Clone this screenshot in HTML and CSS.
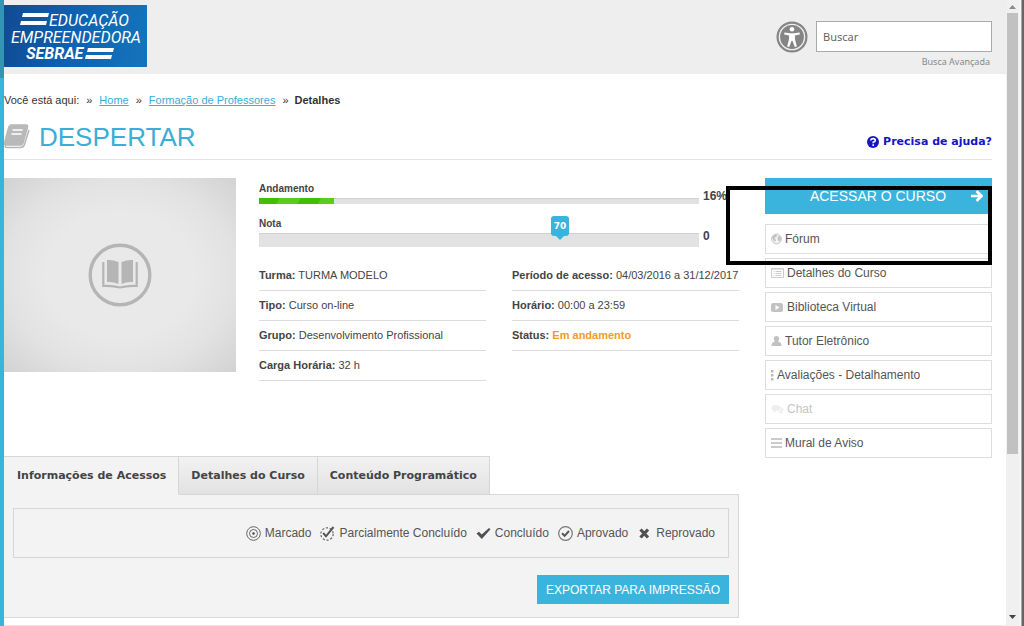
FILE: index.html
```html
<!DOCTYPE html>
<html lang="pt-BR">
<head>
<meta charset="utf-8">
<title>Despertar - Educação Empreendedora Sebrae</title>
<link rel="stylesheet" href="styles.css">
</head>
<body>
<div class="window">
  <div class="stripe"></div>
  <div class="page">
    <header class="header">
      <a class="logo" href="#" aria-label="Educação Empreendedora Sebrae">
        <svg width="143" height="62" viewBox="0 0 143 62">
          <path d="M19 8h26l-1 4H18zM17 16h26l-1 4H16z" fill="#fff"/>
          <path d="M84 43h26l-1 4H83zM82 50h26l-1 4H81z" fill="#fff"/>
          <text class="logo-text" x="45" y="21">EDUCAÇÃO</text>
          <text class="logo-text" x="7" y="38">EMPREENDEDORA</text>
          <text class="logo-text logo-strong" x="22" y="54">SEBRAE</text>
        </svg>
      </a>
      <button class="access" type="button" aria-label="Acessibilidade">
        <svg width="32" height="32" viewBox="0 0 32 32">
          <circle cx="16" cy="16" r="15.500" fill="#858585"/>
          <circle cx="16" cy="16" r="12.600" fill="none" stroke="#eee" stroke-width="1.400"/>
          <circle cx="16" cy="8.200" r="2.300" fill="#fff"/>
          <path d="M8.500 11.500 14 12.200h4l5.500-.7.300 1.900-5 1 .2 3.600 1.800 7.600-2 .5L16.500 20h-1l-2.300 6.100-2-.5L13 18l.2-3.600-5-1z" fill="#fff"/>
        </svg>
      </button>
      <form class="search">
        <input class="search-box" type="text" placeholder="Buscar" aria-label="Buscar">
        <a class="search-more" href="#">Busca Avançada</a>
      </form>
    </header>

    <main class="content">
      <nav class="crumbs">
        <span>Você está aqui:</span><span class="sep">»</span>
        <a href="#">Home</a><span class="sep">»</span>
        <a href="#">Formação de Professores</a><span class="sep">»</span>
        <strong>Detalhes</strong>
      </nav>

      <div class="title-row">
        <svg class="title-icon" width="26" height="26" viewBox="0 0 26 26">
          <path d="M6 1h16q2 0 1.500 2L19 19q-.6 2-2.500 2H2q-2 2 .5 2.500h14q3 0 4-3L25 6" fill="none" stroke="#b5b5b5" stroke-width="1.500"/>
          <path d="M6 1h16q2 0 1.500 2L19 19q-.6 2-2.500 2H0V18L4 3q.5-2 2-2z" fill="#b9b9b9"/>
          <path d="M8.500 6h10M7.500 10h10" stroke="#fff" stroke-width="1.600"/>
        </svg>
        <h1>DESPERTAR</h1>
        <a class="help" href="#">
          <svg width="12" height="12" viewBox="0 0 12 12"><circle cx="6" cy="6" r="6" fill="#1515c4"/><path d="M3.800 4.500Q4 2.600 6.100 2.600T8.300 4.400Q8.300 5.400 6.200 6.200V7.300M6.200 8.300V9.900" fill="none" stroke="#fff" stroke-width="1.600"/></svg>
          <span>Precisa de ajuda?</span>
        </a>
      </div>

      <div class="columns">
        <div class="main">
          <section class="course">
            <div class="thumb">
              <svg width="64" height="64" viewBox="0 0 64 64">
                <circle cx="32" cy="32" r="29.800" fill="none" stroke="#b5b5b5" stroke-width="3.400"/>
                <path d="M19 17q6-.5 11.500 2v22q-5.500-2.500-11.500-2zM45 17q-6-.5-11.500 2v22q5.500-2.500 11.500-2z" fill="#b5b5b5"/>
                <path d="M15.300 19v24q9-.5 16.700 1.500 8-2 16.700-1.500V19" fill="none" stroke="#b5b5b5" stroke-width="2.200"/>
              </svg>
            </div>
            <div class="info">
              <div class="meter">
                <div class="meter-body">
                  <span class="meter-label">Andamento</span>
                  <div class="bar"><div class="bar-fill" style="width:17%"></div></div>
                </div>
                <strong class="meter-value">16%</strong>
              </div>
              <div class="meter">
                <div class="meter-body">
                  <span class="meter-label">Nota</span>
                  <div class="bar bar-tall"><span class="pin" style="left:68.400%">70</span></div>
                </div>
                <strong class="meter-value">0</strong>
              </div>
              <div class="facts">
                <ul>
                  <li><b>Turma:</b> TURMA MODELO</li>
                  <li><b>Tipo:</b> Curso on-line</li>
                  <li><b>Grupo:</b> Desenvolvimento Profissional</li>
                  <li><b>Carga Horária:</b> 32 h</li>
                </ul>
                <ul>
                  <li><b>Período de acesso:</b> 04/03/2016 a 31/12/2017</li>
                  <li><b>Horário:</b> 00:00 a 23:59</li>
                  <li><b>Status:</b> <b class="status">Em andamento</b></li>
                </ul>
              </div>
            </div>
          </section>

          <div class="tabs">
            <button class="tab tab-on" type="button">Informações de Acessos</button>
            <button class="tab" type="button">Detalhes do Curso</button>
            <button class="tab" type="button">Conteúdo Programático</button>
          </div>
          <section class="panel">
            <ul class="legend">
              <li><svg width="15" height="15" viewBox="0 0 15 15" fill="none" stroke="#666"><circle cx="7.500" cy="7.500" r="6.800"/><circle cx="7.500" cy="7.500" r="4"/><circle cx="7.500" cy="7.500" r="1" fill="#555"/></svg>Marcado</li>
              <li><svg width="15" height="15" viewBox="0 0 15 15" fill="none"><circle cx="7" cy="8" r="6.200" stroke="#666" stroke-width="1.200" stroke-dasharray="2.200 1.700"/><path d="M3.200 7 6 10.300 13.500 1" stroke="#555" stroke-width="2"/></svg>Parcialmente Concluído</li>
              <li><svg width="15" height="15" viewBox="0 0 15 15"><path d="M.5 7.500 3 5.800l2.700 2.700L13 2l1.500 1.200L5.800 13z" fill="#505050"/></svg>Concluído</li>
              <li><svg width="15" height="15" viewBox="0 0 15 15" fill="none"><circle cx="7.500" cy="7.500" r="6.800" stroke="#777" stroke-width="1.200"/><path d="M4 7.300 6.600 9.800 11 5" stroke="#555" stroke-width="1.900"/></svg>Aprovado</li>
              <li><svg width="15" height="15" viewBox="0 0 15 15"><path d="M3.500 3.500 11 11.500M11 3.500 3.500 11.500" fill="none" stroke="#505050" stroke-width="3.200"/></svg>Reprovado</li>
            </ul>
            <button class="export" type="button">EXPORTAR PARA IMPRESSÃO</button>
          </section>
        </div>

        <aside class="side">
          <a class="enter" href="#"><span>ACESSAR O CURSO</span>
            <svg width="12" height="12" viewBox="0 0 12 12"><path d="M0 6h10M5.500 1 10.500 6 5.500 11" fill="none" stroke="#fff" stroke-width="2.700"/></svg>
          </a>
          <nav class="menu">
            <a href="#"><svg width="11" height="12" viewBox="0 0 11 12"><circle cx="5.500" cy="6" r="4.900" fill="#f4f4f4" stroke="#c4c4c4"/><path d="M1 4 4 1.500l2 .5-.5 2L3.500 5 5 7 4 9 2 7zM7 3l2.500.5.500 3L8 9 6.500 6z" fill="#c4c4c4"/></svg>Fórum</a>
            <a href="#"><svg width="13" height="12" viewBox="0 0 13 12"><path d="M.5 1.500h12v9H.5z" fill="none" stroke="#ccc"/><path d="M.5 2h12M2.500 4.500h1m1 0h6M2.500 6.500h1m1 0h6M2.500 8.500h1m1 0h6" stroke="#ccc"/></svg>Detalhes do Curso</a>
            <a href="#"><svg width="13" height="12" viewBox="0 0 13 12"><rect y="2" width="12" height="9" rx="2" fill="#c2c2c2"/><path d="M4.500 4v5l4-2.500z" fill="#fff"/></svg>Biblioteca Virtual</a>
            <a href="#"><svg width="11" height="12" viewBox="0 0 11 12"><path d="M5.500 1q2.700 0 2.700 2.500Q8.200 5.500 7 6.500q3.500.5 3.500 4.500H.5Q.5 7 4 6.500 2.800 5.500 2.800 3.500 2.800 1 5.500 1z" fill="#c2c2c2"/></svg>Tutor Eletrônico</a>
            <a href="#"><svg width="3" height="12" viewBox="0 0 3 12"><path d="M0 1h2.500v2.500H0zM0 5h2.500v2.500H0zM0 9h2.500v2.500H0z" fill="#bbb"/></svg>Avaliações - Detalhamento</a>
            <a class="off" href="#"><svg width="13" height="12" viewBox="0 0 13 12"><path d="M5 2q4.500 0 4.500 3T5 8L2 9.500 2.500 7.500Q.5 6.500.5 5 .5 2 5 2zM10.500 4q2 1 2 3 0 1.500-1.500 2l.5 2L8.500 9.500H6Q10 8.500 10.500 4z" fill="#eee"/></svg>Chat</a>
            <a href="#"><svg width="11" height="12" viewBox="0 0 11 12"><path d="M0 2h11M0 6h11M0 10h11" stroke="#bbb" stroke-width="1.300"/></svg>Mural de Aviso</a>
          </nav>
          <div class="marker"></div>
        </aside>
      </div>
    </main>
  </div>
  <div class="scroll">
    <svg width="13" height="13" viewBox="0 0 13 13"><path d="M3 9 6.500 5 10 9z" fill="#8a8a8a"/></svg>
    <div class="track"><div class="handle"></div></div>
    <svg width="13" height="17" viewBox="0 0 13 17"><path d="M3 6h7L6.500 10z" fill="#444"/></svg>
  </div>
  <div class="edge"></div>
</div>
</body>
</html>
```
FILE: styles.css
```css
* { box-sizing: border-box; }

body {
  margin: 0;
  background: #fff;
  color: #444;
  font-family: "Liberation Sans", Arial, sans-serif;
  font-size: 11px;
  line-height: 14px;
}

ul { list-style: none; margin: 0; padding: 0; }
svg { display: block; flex: none; }
button { font-family: inherit; cursor: pointer; }
a { color: inherit; text-decoration: none; }

.window { display: flex; min-height: 100vh; }
.stripe { width: 4px; background: linear-gradient(#3295b4 78px, #3ab4dc 78px); }
.page { flex: 1; min-width: 0; border-bottom: 1px solid #e8e8e8; }

/* Header */
.header {
  display: flex;
  align-items: flex-start;
  height: 74px;
  padding: 5px 14px 0 0;
  background: #eee;
}
.logo { background: linear-gradient(100deg, #114a93, #0d60b0 45%, #1475bb); }
.logo-text { font: italic 16px Roboto, sans-serif; fill: #fff; }
.logo-strong { font-weight: 700; }
.access { margin: 16px 8px 0 auto; padding: 0; border: 0; background: none; }
.search { display: flex; flex-direction: column; align-items: flex-end; width: 176px; padding-top: 16px; }
.search-box {
  width: 100%;
  height: 31px;
  padding: 0 6px;
  border: 1px solid #aaa;
  background: #fff;
  font: 11px "Noto Sans", sans-serif;
}
.search-box::placeholder { color: #666; opacity: 1; }
.search-more { padding: 3px 2px 0 0; color: #888; font: 9px/14px "Noto Sans", sans-serif; }

/* Heading */
.content { padding: 19px 14px 7px 0; }
.crumbs { display: flex; color: #333; }
.crumbs a { color: #3aaed6; text-decoration: underline; }
.crumbs .sep { padding: 0 7px; }
.crumbs .sep:last-of-type { padding-right: 6px; }
.title-row {
  display: flex;
  align-items: center;
  height: 53px;
  margin-bottom: 18px;
  padding-top: 8px;
  border-bottom: 1px solid #e2e2e2;
}
.title-row h1 { margin: 0 auto 0 9px; color: #3aaed6; font-size: 26px; line-height: 32px; font-weight: 400; }
.help { display: flex; align-items: center; gap: 4px; padding-top: 10px; color: #1515c4; font: bold 11px/16px "DejaVu Sans", sans-serif; }

.columns { display: grid; grid-template-columns: minmax(0, 1fr) 227px; gap: 26px; align-items: start; }

/* Course summary */
.course { display: grid; grid-template-columns: 232px minmax(0, 1fr); gap: 23px; min-height: 278px; align-items: start; }
.thumb {
  display: flex;
  align-items: center;
  justify-content: center;
  height: 194px;
  background: radial-gradient(ellipse, #e9e9e9 45%, #e2e2e2 70%, #d2d2d2);
}
.info { padding-top: 3px; }
.meter { display: flex; align-items: flex-end; gap: 4px; height: 23px; }
.meter + .meter { height: 31px; margin-top: 12px; }
.meter-body { width: 440px; }
.meter-label { display: block; margin-bottom: 2px; font-weight: bold; font-size: 10px; }
.meter-value { font-size: 12px; line-height: 16px; }
.meter + .meter .meter-value { padding-bottom: 3px; }
.bar { position: relative; height: 6px; background: #e2e2e2; border-top: 1px solid #d0d0d0; }
.bar-tall { height: 14px; }
.bar-fill { height: 6px; margin-top: -1px; background: repeating-linear-gradient(120deg, #40c000 0 18px, #5bcb20 18px 36px); }
.pin {
  position: absolute;
  bottom: 11px;
  width: 18px;
  height: 20px;
  margin-left: -9px;
  border-radius: 3px;
  background: #3ab4dc;
  color: #fff;
  font: bold 9px/20px "DejaVu Sans", sans-serif;
  text-align: center;
}
.pin::after {
  content: "";
  position: absolute;
  top: 20px;
  left: 5px;
  border: 4px solid transparent;
  border-top-color: #3ab4dc;
  border-bottom: 0;
}
.facts { display: grid; grid-template-columns: 1fr 1fr; gap: 26px; padding-top: 14px; }
.facts li { height: 30px; padding-top: 7px; border-bottom: 1px solid #dcdcdc; white-space: nowrap; }
.status { color: #f79a1e; }

/* Tabs */
.tabs { display: flex; }
.tab {
  height: 39px;
  margin-bottom: -1px;
  padding: 0 12px;
  border: 1px solid #d6d6d6;
  border-left: 0;
  background: linear-gradient(#f2f2f2, #e2e2e2);
  color: #444;
  font: bold 11px "DejaVu Sans", sans-serif;
}
.tab-on { background: #f3f3f3; border-bottom-color: #f3f3f3; padding-left: 13px; }
.panel { padding: 13px 9px; border: 1px solid #d8d8d8; border-left: 0; background: #f3f3f3; }
.legend {
  display: flex;
  justify-content: flex-end;
  align-items: center;
  gap: 9px;
  height: 50px;
  padding: 0 13px;
  border: 1px solid #d6d6d6;
  font-size: 12px;
  color: #555;
}
.panel .legend { margin-bottom: 17px; }
.legend li { display: flex; align-items: center; gap: 4px; }
.export { display: block; height: 29px; margin-left: auto; padding: 0 9px; border: 0; background: #3ab4dc; color: #fff; font-size: 12px; }

/* Side menu */
.side { position: relative; }
.enter { display: flex; align-items: center; height: 36px; padding-right: 9px; background: #3ab4dc; color: #fff; font-size: 14px; }
.enter span { flex: 1; padding-left: 20px; text-align: center; }
.menu { display: grid; gap: 4px; padding-top: 10px; }
.menu a {
  display: flex;
  align-items: center;
  gap: 3px;
  height: 30px;
  padding: 0 5px;
  border: 1px solid #ddd;
  color: #555;
  font-size: 12px;
}
.menu .off { color: #c4c4c4; }
.marker { position: absolute; top: 8px; left: -39px; right: 0; height: 79px; border: 4px solid #000; pointer-events: none; }

/* Window scroll bar */
.scroll { display: flex; flex-direction: column; width: 13px; background: #f0f0f0; }
.track { flex: 1; }
.handle { height: 74%; margin: 0 1px; background: #c1c1c1; }
.edge { width: 5px; background: linear-gradient(90deg, #f5f5f5 40%, #aaa 40% 60%, #666 60%); }
```
